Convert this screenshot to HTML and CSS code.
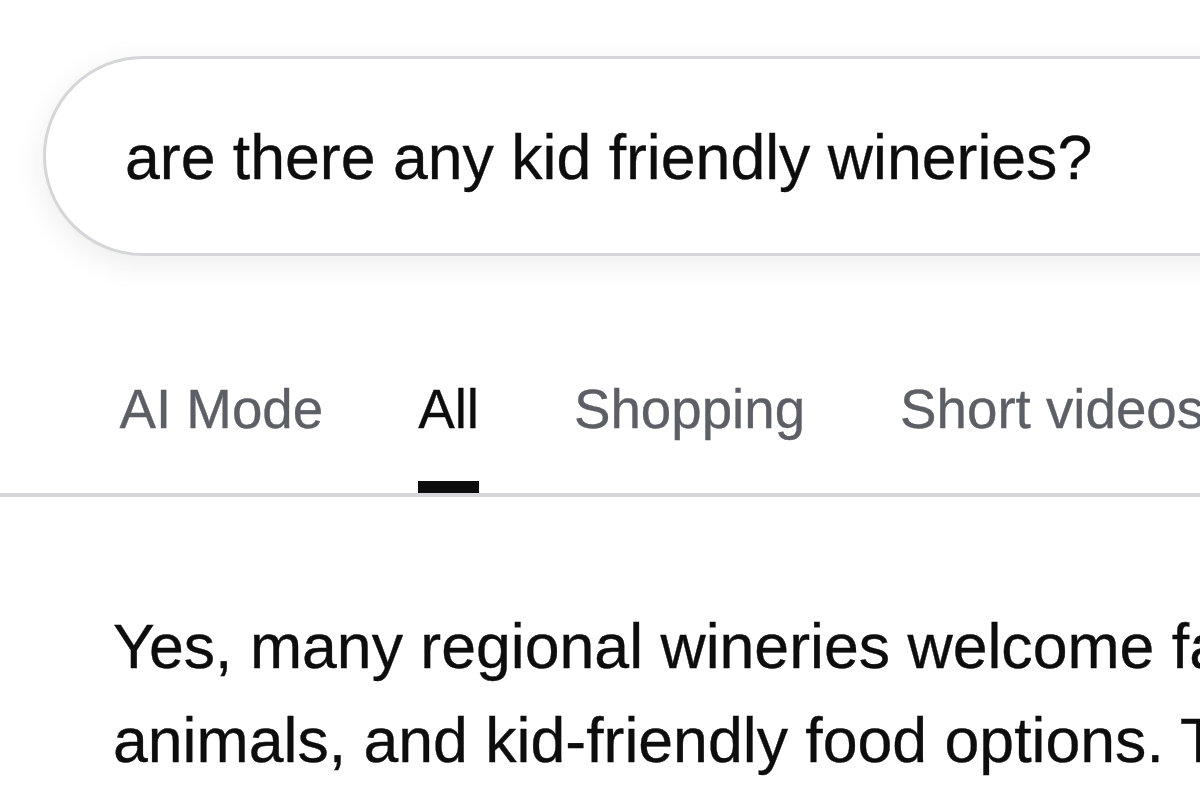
FILE: index.html
```html
<!DOCTYPE html>
<html lang="en">
<head>
<meta charset="utf-8">
<title>are there any kid friendly wineries? - Search</title>
<link rel="stylesheet" href="styles.css">
</head>
<body>
<div class="page">
  <header class="header">
    <div class="searchbox">
      <span class="query">are there any kid friendly wineries?</span>
    </div>
  </header>
  <nav class="tabs">
    <a class="tab"><span class="tab-label">AI Mode</span></a>
    <a class="tab active"><span class="tab-label">All</span></a>
    <a class="tab"><span class="tab-label">Shopping</span></a>
    <a class="tab"><span class="tab-label">Short videos</span></a>
    <a class="tab"><span class="tab-label">Images</span></a>
  </nav>
  <main class="results">
    <p class="answer">Yes, many regional wineries welcome families with playgrounds, lawn games, farm<br>animals, and kid-friendly food options. They often offer non-alcoholic juices too.</p>
  </main>
</div>
</body>
</html>
```

FILE: styles.css
```css
html, body {
  margin: 0;
  padding: 0;
  background: #ffffff;
  overflow: hidden;
}

.page {
  width: 1200px;
  height: 800px;
  overflow: hidden;
  font-family: "Liberation Sans", Arial, sans-serif;
  -webkit-text-stroke: 0.35px currentColor;
}

.header {
  padding: 56px 0 0 43px;
}

.searchbox {
  box-sizing: border-box;
  width: 1500px;
  height: 200px;
  border: 3px solid #d5d6d9;
  border-radius: 100px;
  background: #ffffff;
  box-shadow: 0 8px 30px rgba(32, 33, 36, 0.085);
  display: flex;
  align-items: center;
  padding-left: 79px;
}

.query {
  font-size: 62.6px;
  line-height: 70px;
  color: #0d0d0d;
  white-space: nowrap;
  margin-top: 2px;
}

.tabs {
  margin-top: 122px;
  padding-left: 72px;
  display: flex;
  border-bottom: 4px solid #d6d6d8;
  width: 1600px;
}

.tab {
  padding: 0 47.5px;
  font-size: 54.7px;
  line-height: 62px;
  color: #5c5f65;
  white-space: nowrap;
}

.tab-label {
  display: block;
  padding-bottom: 41px;
  border-bottom: 12px solid transparent;
}

.tab.active {
  color: #0d0d0d;
}

.tab.active .tab-label {
  border-bottom-color: #0d0d0d;
}

.results {
  padding: 102px 0 0 113px;
}

.answer {
  margin: 0;
  font-size: 62.6px;
  line-height: 94px;
  color: #0d0d0d;
  white-space: nowrap;
}
```
